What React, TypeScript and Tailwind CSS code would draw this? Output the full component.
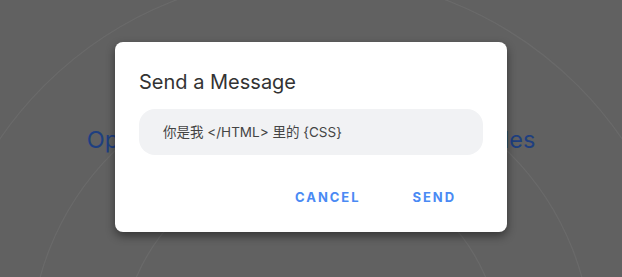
import { JSX } from "react";

// faint ripple rings behind the overlay
const Rings = (): JSX.Element => (
  <svg
    className="absolute inset-0 h-full w-full"
    viewBox="0 0 622 277"
    fill="none"
  >
    <circle cx="311" cy="352" r="190" stroke="#6a6a6a" strokeWidth="1.2" />
    <circle cx="311" cy="352" r="281" stroke="#6a6a6a" strokeWidth="1.2" />
    <circle cx="311" cy="352" r="377" stroke="#6a6a6a" strokeWidth="1.2" />
  </svg>
);

const App = (): JSX.Element => {
  return (
    <main
      className="relative h-[277px] w-full overflow-hidden bg-[#616161]"
      style={{ fontFamily: "Inter, 'Noto Sans CJK SC', sans-serif" }}
    >
      <Rings />
      <div className="relative flex h-full items-center justify-center pt-[2px]">
        <h1 className="whitespace-nowrap text-[23.5px] font-normal text-[#1e3f80]">
          Open a Demo Dialog with Custom Styles
        </h1>
      </div>

      {/* dialog */}
      <div className="absolute inset-0 flex items-center justify-center pb-[3px]">
        <section className="flex h-[190px] w-[392px] flex-col rounded-lg bg-white px-6 pt-[26px] shadow-[0_4px_10px_rgba(0,0,0,0.45)]">
          <h2 className="text-[20px] leading-7 text-[#333333]">
            Send a Message
          </h2>
          <div className="mt-[13px] flex h-[46px] items-center rounded-2xl bg-[#f1f2f4] px-6 text-[13.5px] text-[#444444]">
            你是我 &lt;/HTML&gt; 里的 {"{CSS}"}
          </div>
          <div className="mt-[29px] flex justify-end gap-5 pr-[11px]">
            <button className="px-4 py-1 text-[13px] font-bold tracking-[0.15em] text-[#4a8af4]">
              CANCEL
            </button>
            <button className="px-4 py-1 text-[13px] font-bold tracking-[0.15em] text-[#4a8af4]">
              SEND
            </button>
          </div>
        </section>
      </div>
    </main>
  );
};

export default App;
